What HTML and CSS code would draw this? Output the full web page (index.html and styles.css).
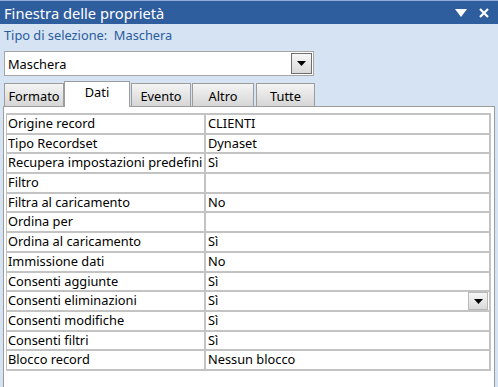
FILE: index.html
```html
<!DOCTYPE html>
<html lang="it">
<head>
<meta charset="utf-8">
<link rel="stylesheet" href="styles.css">
</head>
<body>
<div class="window">
  <div class="titlebar">
    <span class="title">Finestra delle proprietà</span>
    <span class="tbtns">
      <svg width="14" height="10" viewBox="0 0 14 10"><path d="M1 1h12L7 9z" fill="#fff"/></svg>
      <svg width="12" height="12" viewBox="0 0 12 12"><path d="M2 2l8 8M10 2l-8 8" stroke="#fff" stroke-width="2.2"/></svg>
    </span>
  </div>
  <div class="seltype">Tipo di selezione:&nbsp; Maschera</div>
  <div class="combo">
    <span class="combo-text">Maschera</span>
    <span class="ddbtn"><svg width="9" height="5" viewBox="0 0 9 5"><path d="M0 0h9L4.5 5z" fill="#000"/></svg></span>
  </div>
  <div class="tabs">
    <div class="tab t-formato">Formato</div>
    <div class="tab active t-dati">Dati</div>
    <div class="tab t-evento">Evento</div>
    <div class="tab t-altro">Altro</div>
    <div class="tab t-tutte">Tutte</div>
  </div>
  <div class="panel">
    <div class="grid">
      <div class="row"><div class="k">Origine record</div><div class="v">CLIENTI</div></div>
      <div class="row"><div class="k">Tipo Recordset</div><div class="v">Dynaset</div></div>
      <div class="row"><div class="k">Recupera impostazioni predefini</div><div class="v">Sì</div></div>
      <div class="row"><div class="k">Filtro</div><div class="v"></div></div>
      <div class="row"><div class="k">Filtra al caricamento</div><div class="v">No</div></div>
      <div class="row"><div class="k">Ordina per</div><div class="v"></div></div>
      <div class="row"><div class="k">Ordina al caricamento</div><div class="v">Sì</div></div>
      <div class="row"><div class="k">Immissione dati</div><div class="v">No</div></div>
      <div class="row"><div class="k">Consenti aggiunte</div><div class="v">Sì</div></div>
      <div class="row"><div class="k">Consenti eliminazioni</div><div class="v">Sì<span class="rowdd"><svg width="9" height="5" viewBox="0 0 9 5"><path d="M0 0h9L4.5 5z" fill="#000"/></svg></span></div></div>
      <div class="row"><div class="k">Consenti modifiche</div><div class="v">Sì</div></div>
      <div class="row"><div class="k">Consenti filtri</div><div class="v">Sì</div></div>
      <div class="row"><div class="k">Blocco record</div><div class="v">Nessun blocco</div></div>
    </div>
  </div>
</div>
</body>
</html>
```
FILE: styles.css
```css
html, body {
  margin: 0;
  padding: 0;
  background: #d5e3f3;
  overflow: hidden;
}
body {
  font-family: "Noto Sans", "Open Sans", sans-serif;
  font-size: 12.8px;
  color: #000;
}
.window {
  width: 498px;
  height: 387px;
  display: flex;
  flex-direction: column;
}
.titlebar {
  height: 23px;
  background: #2f5e9f;
  border-top: 1px solid #8fb0da;
  display: flex;
  align-items: center;
  justify-content: space-between;
  padding: 0 8px 0 4px;
}
.title {
  color: #fff;
  font-size: 14.7px;
  line-height: 22px;
}
.tbtns {
  display: flex;
  align-items: center;
  gap: 10px;
}
.seltype {
  color: #2b5c9c;
  height: 22px;
  line-height: 22px;
  padding-left: 4px;
  margin-bottom: 5px;
}
.combo {
  margin-left: 4px;
  width: 308px;
  height: 23px;
  border: 1px solid #a6a6a6;
  background: #fff;
  display: flex;
  align-items: center;
  justify-content: space-between;
}
.combo-text {
  padding-left: 3px;
}
.ddbtn {
  width: 19px;
  height: 19px;
  margin-right: 1px;
  border: 1px solid #6f6f6f;
  background: linear-gradient(#f7f7f7, #d9d9d9);
  display: flex;
  align-items: center;
  justify-content: center;
}
.tabs {
  display: flex;
  align-items: flex-end;
  padding-left: 4px;
  margin-top: 5px;
  height: 25px;
}
.tab {
  border: 1px solid #9c9c9c;
  border-bottom: none;
  background: linear-gradient(#f4f4f4, #d6d6d6);
  text-align: center;
  box-sizing: border-box;
  height: 23px;
  line-height: 24px;
}
.t-formato { width: 60px; }
.t-dati { width: 66px; }
.t-evento { width: 60px; margin-left: 1px; }
.t-altro { width: 62px; margin-left: 1px; }
.t-tutte { width: 59px; margin-left: 2px; }
.tab.active {
  background: #fff;
  height: 26px;
  line-height: 20px;
  position: relative;
  z-index: 1;
  margin-bottom: -1px;
}
.panel {
  flex: 1;
  margin: 0 3px;
  border: 1px solid #9c9c9c;
  border-bottom: none;
  background: #fff;
  padding: 6px 3px 0 2px;
}
.grid {
  border-top: 2px solid #c3c3c3;
  border-left: 1px solid #c3c3c3;
  border-right: 2px solid #c3c3c3;
}
.row {
  display: flex;
  height: 17.7px;
  border-bottom: 2px solid #c3c3c3;
}
.k {
  width: 196px;
  padding-left: 1px;
  border-right: 2px solid #c3c3c3;
  line-height: 17.7px;
  white-space: nowrap;
  overflow: hidden;
}
.v {
  flex: 1;
  padding-left: 2px;
  line-height: 17.7px;
  display: flex;
  justify-content: space-between;
  align-items: center;
}
.rowdd {
  width: 18px;
  height: 16px;
  border: 1px solid #b8b8b8;
  background: linear-gradient(#f7f7f7, #d9d9d9);
  display: flex;
  align-items: center;
  justify-content: center;
  margin-right: 1px;
}
```
